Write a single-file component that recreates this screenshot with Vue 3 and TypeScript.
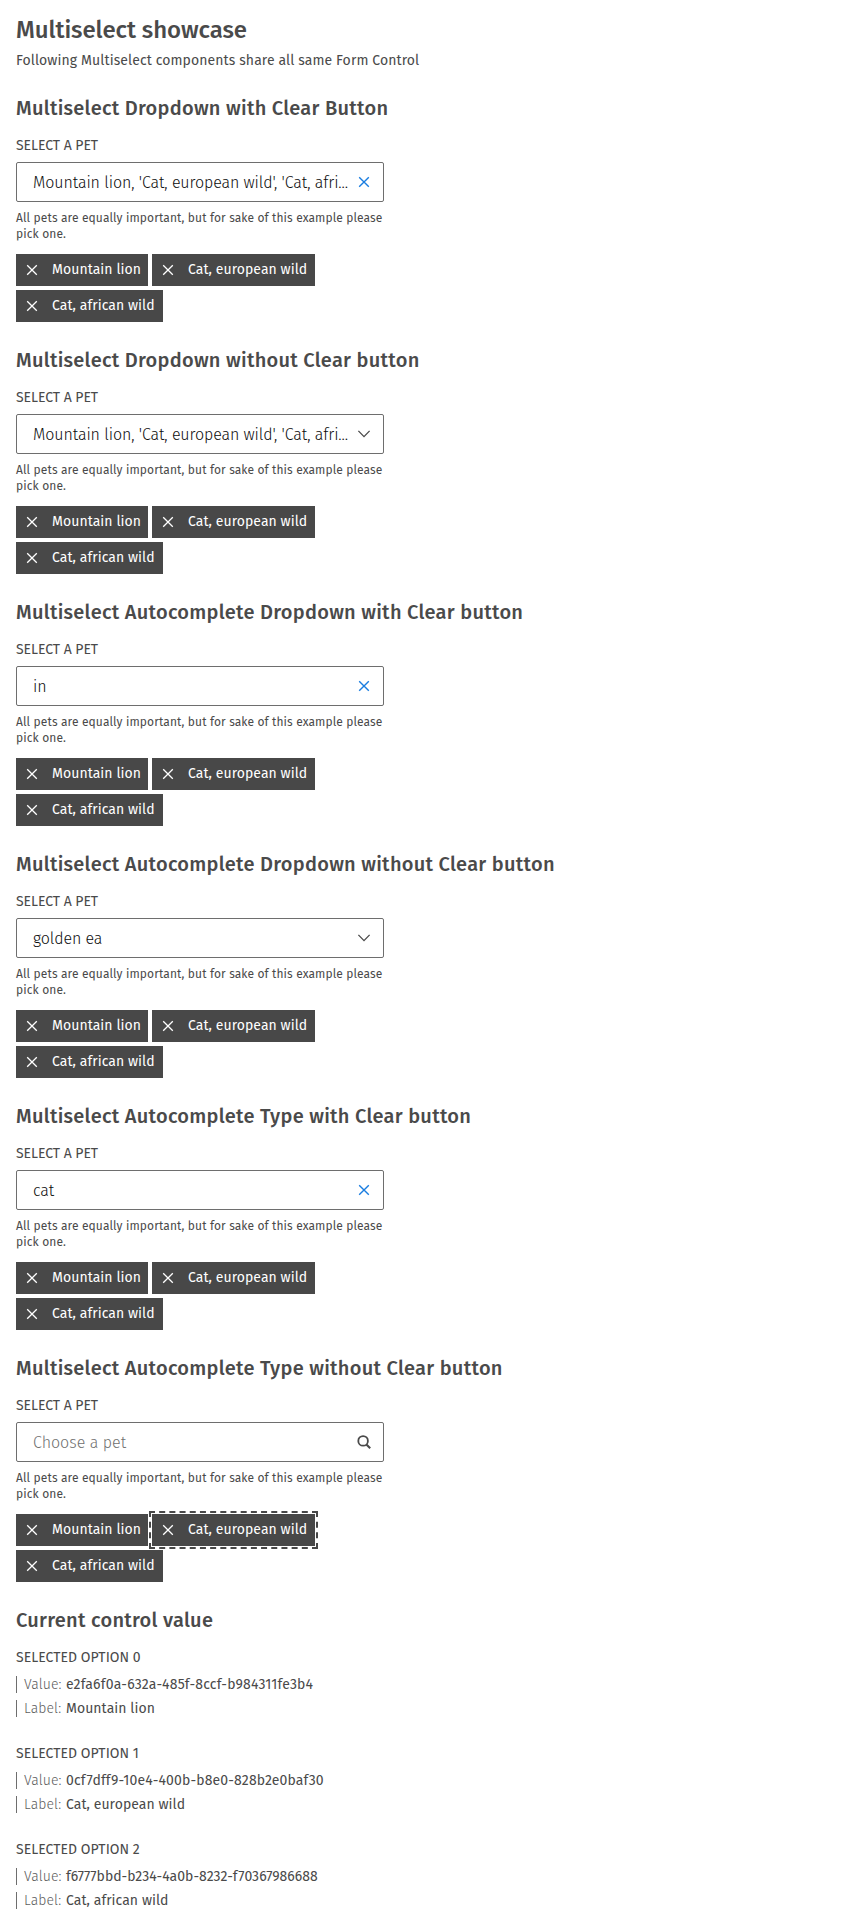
<script setup lang="ts">
type Icon = 'clear' | 'chevron' | 'search'

interface Field {
  title: string
  value?: string
  icon: Icon
  focused?: number
}

interface Pet {
  id: string
  label: string
  width: number
  tracking: number
}

const joined = "Mountain lion, 'Cat, european wild', 'Cat, afri..."

const fields: Field[] = [
  { title: 'Multiselect Dropdown with Clear Button', value: joined, icon: 'clear' },
  { title: 'Multiselect Dropdown without Clear button', value: joined, icon: 'chevron' },
  { title: 'Multiselect Autocomplete Dropdown with Clear button', value: 'in', icon: 'clear' },
  { title: 'Multiselect Autocomplete Dropdown without Clear button', value: 'golden ea', icon: 'chevron' },
  { title: 'Multiselect Autocomplete Type with Clear button', value: 'cat', icon: 'clear' },
  { title: 'Multiselect Autocomplete Type without Clear button', icon: 'search', focused: 1 },
]

const pets: Pet[] = [
  { id: 'e2fa6f0a-632a-485f-8ccf-b984311fe3b4', label: 'Mountain lion', width: 132, tracking: 0.2 },
  { id: '0cf7dff9-10e4-400b-b8e0-828b2e0baf30', label: 'Cat, european wild', width: 163, tracking: 0.15 },
  { id: 'f6777bbd-b234-4a0b-8232-f70367986688', label: 'Cat, african wild', width: 147, tracking: 0.02 },
]
</script>

<template>
  <main class="page">
    <h1>Multiselect showcase</h1>
    <p class="lead">Following Multiselect components share all same Form Control</p>

    <section v-for="field in fields" :key="field.title">
      <h2>{{ field.title }}</h2>
      <div class="label">SELECT A PET</div>
      <div class="control">
        <span v-if="field.value" class="text">{{ field.value }}</span>
        <span v-else class="text placeholder">Choose a pet</span>
        <svg class="icon" :class="field.icon" viewBox="0 0 16 16" width="16" height="16" fill="none">
          <path v-if="field.icon === 'clear'" d="M3.2 3.2l9.6 9.6M12.8 3.2l-9.6 9.6" stroke-width="1.4" />
          <path v-else-if="field.icon === 'chevron'" d="M2.4 4.9L8 10.6l5.6-5.7" stroke-width="1.3" />
          <template v-else>
            <circle cx="7.1" cy="6.9" r="4.8" stroke-width="1.8" />
            <path d="M10.4 10.4l3.8 3.9" stroke-width="2.1" />
          </template>
        </svg>
      </div>
      <p class="hint">All pets are equally important, but for sake of this example please pick one.</p>
      <div class="chips">
        <button
          v-for="(pet, i) in pets"
          :key="pet.id"
          type="button"
          class="chip"
          :class="{ focused: field.focused === i }"
          :style="{ width: pet.width + 'px' }"
        >
          <svg viewBox="0 0 16 16" width="16" height="16" fill="none">
            <path d="M3.2 3.2l9.6 9.6M12.8 3.2l-9.6 9.6" stroke="#fff" stroke-width="1.3" />
          </svg>
          <span>{{ pet.label }}</span>
        </button>
      </div>
    </section>

    <section>
      <h2>Current control value</h2>
      <div v-for="(pet, i) in pets" :key="pet.id" class="option">
        <div class="label option-label">SELECTED OPTION {{ i }}</div>
        <div class="row">
          <span class="key">Value:</span>
          <span :style="{ letterSpacing: pet.tracking + 'px' }">{{ pet.id }}</span>
        </div>
        <div class="row"><span class="key">Label:</span><span class="name">{{ pet.label }}</span></div>
      </div>
    </section>
  </main>
</template>

<style>
body {
  background: #fff;
}
</style>

<style scoped>
.page {
  box-sizing: border-box;
  height: 1930px;
  padding: 16px;
  color: #4a4a4a;
  font-family: "Fira Sans", "Noto Sans", "Open Sans", sans-serif;
  font-size: 14px;
  font-weight: 400;
}
h1 {
  margin: 0;
  font-size: 24px;
  line-height: 28px;
  font-weight: 500;
  letter-spacing: -0.07px;
}
.lead {
  margin: 7px 0 25px;
  line-height: 20px;
  letter-spacing: 0.1px;
}
section {
  height: 252px;
}
h2 {
  margin: 0;
  font-size: 20px;
  line-height: 24px;
  font-weight: 500;
  letter-spacing: 0.27px;
}
.label {
  margin-top: 16px;
  line-height: 20px;
  letter-spacing: -0.05px;
}
.control {
  box-sizing: border-box;
  display: flex;
  align-items: center;
  justify-content: space-between;
  width: 368px;
  height: 40px;
  margin-top: 6px;
  padding: 0 11px 0 16px;
  border: 1px solid #6e6e6e;
  border-radius: 2px;
}
.text {
  color: #0c0c0c;
  font-size: 16px;
  line-height: 25px;
  font-weight: 300;
  letter-spacing: -0.1px;
  white-space: nowrap;
}
.placeholder {
  color: #707070;
  letter-spacing: 0;
}
.icon {
  flex: none;
  stroke: #4a4a4a;
}
.icon.clear {
  stroke: #1a7de0;
}
.hint {
  width: 370px;
  margin: 8px 0 12px;
  font-size: 12px;
  line-height: 16px;
  letter-spacing: 0.115px;
}
.chips {
  display: flex;
  flex-wrap: wrap;
  gap: 4px;
  width: 368px;
}
.chip {
  box-sizing: border-box;
  display: flex;
  align-items: center;
  gap: 12px;
  height: 32px;
  padding: 0 0 0 8px;
  border: 0;
  background: #484848;
  color: #fff;
  font: inherit;
  line-height: 20px;
  letter-spacing: 0.06px;
  white-space: nowrap;
}
.chip.focused {
  outline: 2px dashed #484848;
  outline-offset: 1px;
}
.option {
  height: 80px;
  margin-bottom: 16px;
}
.option-label {
  margin-bottom: 8px;
  letter-spacing: 0.03px;
}
.row {
  display: flex;
  height: 17px;
  margin-bottom: 7px;
  padding-left: 7px;
  border-left: 1px solid #6e6e6e;
  line-height: 17px;
  white-space: nowrap;
}
.key {
  width: 42px;
  color: #606060;
  font-weight: 300;
  letter-spacing: 0.1px;
}
.name {
  letter-spacing: 0.05px;
}
</style>
